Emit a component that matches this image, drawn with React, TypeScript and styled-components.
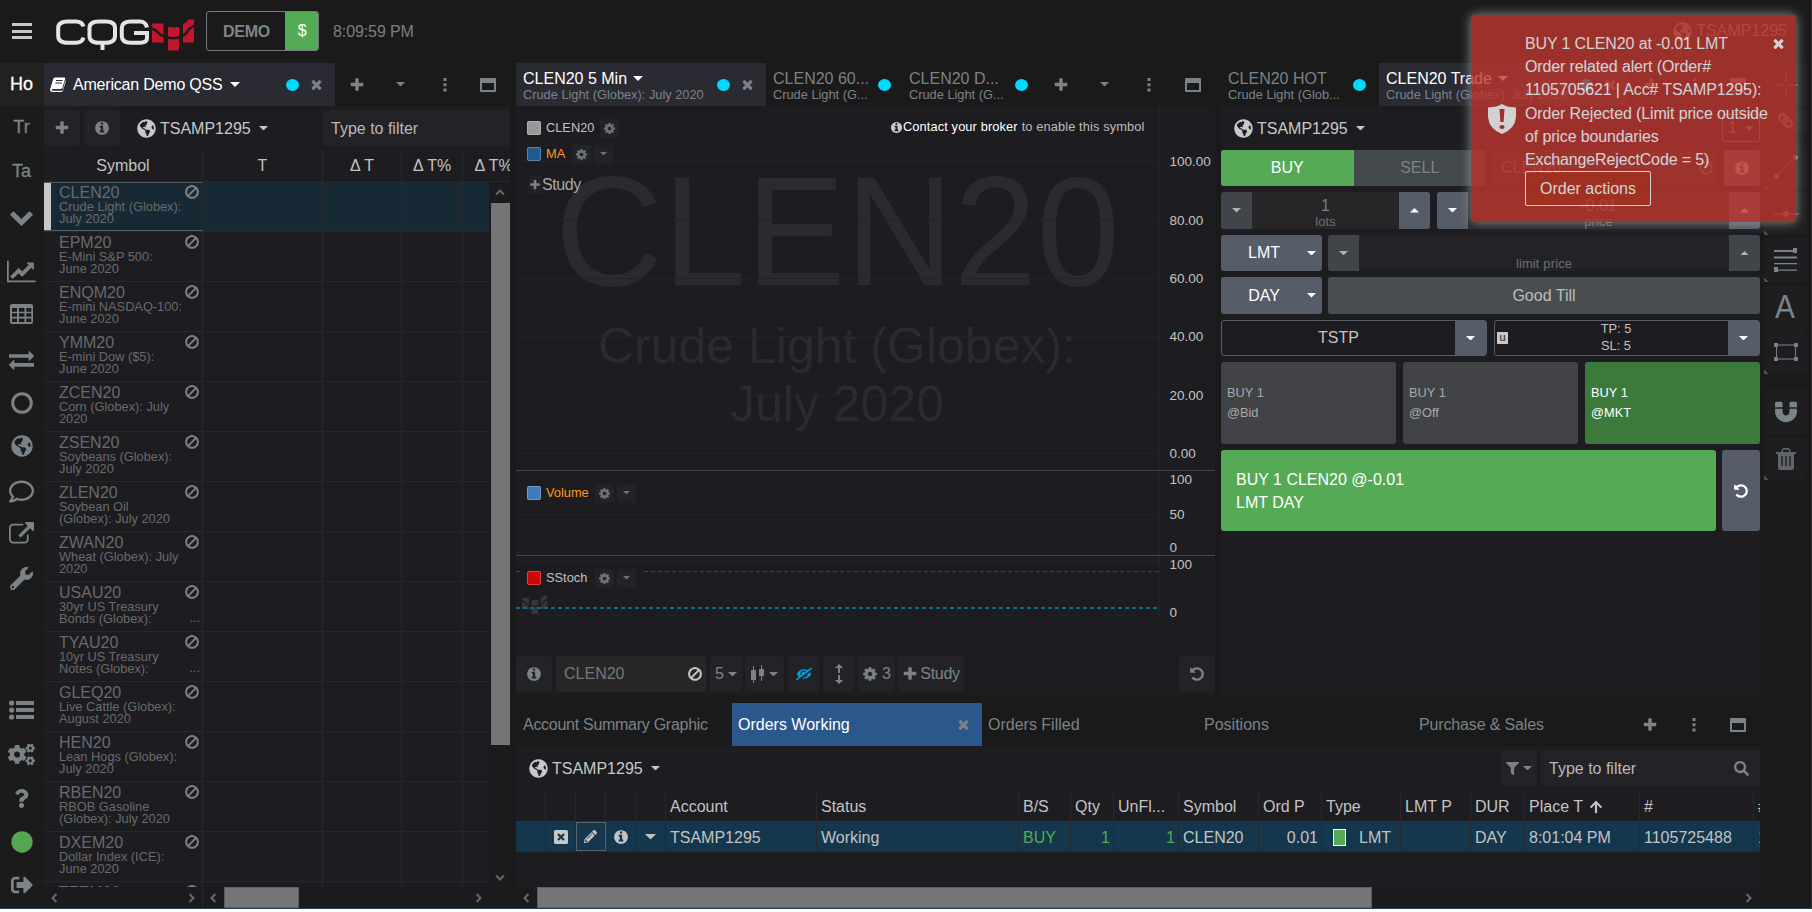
import React from "react";
import styled, { createGlobalStyle } from "styled-components";
import {
  FaGlobeAmericas, FaRegComment, FaWrench, FaCogs,
  FaQuestion, FaCircle, FaSignOutAlt, FaFilter, FaSearch, FaPencilAlt, FaArrowUp,
  FaMagnet, FaLink, FaEyeSlash,
} from "react-icons/fa";

const Global = createGlobalStyle`
  html, body { margin: 0; padding: 0; background: #fff; }
  * { box-sizing: border-box; }
  body { font-family: "Liberation Sans", Arial, sans-serif; font-size: 16px; color: #c3c3c3; overflow: hidden; }
  svg { display: block; flex: none; }
`;

/* ---------- icons ---------- */

const paths = {
  times: "M1490 1322q0 40-28 68l-136 136q-28 28-68 28t-68-28l-294-294-294 294q-28 28-68 28t-68-28l-136-136q-28-28-28-68t28-68l294-294-294-294q-28-28-28-68t28-68l136-136q28-28 68-28t68 28l294 294 294-294q28-28 68-28t68 28l136 136q28 28 28 68t-28 68l-294 294 294 294q28 28 28 68z",
  plus: "M1600 736v192q0 40-28 68t-68 28h-416v416q0 40-28 68t-68 28h-192q-40 0-68-28t-28-68v-416h-416q-40 0-68-28t-28-68v-192q0-40 28-68t68-28h416v-416q0-40 28-68t68-28h192q40 0 68 28t28 68v416h416q40 0 68 28t28 68z",
  chevron: "M1683 808l-742 741q-19 19-45 19t-45-19l-742-741q-19-19-19-45.500t19-45.500l166-165q19-19 45-19t45 19l531 531 531-531q19-19 45-19t45 19l166 165q19 19 19 45.500t-19 45.500z",
  info: "M1152 1376v-160q0-14-9-23t-23-9h-96v-512q0-14-9-23t-23-9h-320q-14 0-23 9t-9 23v160q0 14 9 23t23 9h96v320h-96q-14 0-23 9t-9 23v160q0 14 9 23t23 9h448q14 0 23-9t9-23zm-128-896v-160q0-14-9-23t-23-9h-192q-14 0-23 9t-9 23v160q0 14 9 23t23 9h192q14 0 23-9t9-23zm640 416q0 209-103 385.500t-279.500 279.500-385.500 103-385.500-103-279.500-279.500-103-385.500 103-385.500 279.500-279.500 385.500-103 385.500 103 279.500 279.500 103 385.500z",
  ban: "M1440 893q0-161-87-295l-754 753q137 89 297 89 111 0 211.500-43.500t173.500-116.500 116-174.500 43-212.500zm-999 299l755-754q-135-91-300-91-148 0-273 73t-198 199-73 274q0 162 89 299zm1223-299q0 157-61 300t-163.500 246-245 164-298.500 61-298.500-61-245-164-163.500-246-61-300 61-299.500 163.500-245.500 245-164 298.500-61 298.500 61 245 164 163.500 245.500 61 299.500z",
  cog: "M1152 896q0-106-75-181t-181-75-181 75-75 181 75 181 181 75 181-75 75-181zm512-109v222q0 12-8 23t-20 13l-185 28q-19 54-39 91 35 50 107 138 10 12 10 25t-9 23q-27 37-99 108t-94 71q-12 0-26-9l-138-108q-44 23-91 38-16 136-29 186-7 28-36 28h-222q-14 0-24.500-8.500t-11.500-21.500l-28-184q-49-16-90-37l-141 107q-10 9-25 9-14 0-25-11-126-114-165-168-7-10-7-23 0-12 8-23 15-21 51-66.500t54-70.500q-27-50-41-99l-183-27q-13-2-21-12.500t-8-23.500v-222q0-12 8-23t19-13l186-28q14-46 39-92-40-57-107-138-10-12-10-24 0-10 9-23 26-36 98.500-107.500t94.500-71.500q13 0 26 10l138 107q44-23 91-38 16-136 29-186 7-28 36-28h222q14 0 24.500 8.500t11.500 21.500l28 184q49 16 90 37l142-107q9-9 24-9 13 0 25 10 129 119 165 170 7 8 7 22 0 12-8 23-15 21-51 66.500t-54 70.500q26 50 41 98l183 28q13 2 21 12.500t8 23.500z",
  exchange: "M1792 1184v192q0 13-9.500 22.500t-22.500 9.500h-1376v192q0 13-9.500 22.500t-22.500 9.500q-12 0-24-10l-319-320q-9-9-9-22 0-14 9-23l320-320q9-9 23-9 13 0 22.500 9.500t9.500 22.500v192h1376q13 0 22.500 9.500t9.500 22.500zm0-544q0 14-9 23l-320 320q-9 9-23 9-13 0-22.500-9.500t-9.500-22.500v-192h-1376q-13 0-22.500-9.500t-9.500-22.500v-192q0-13 9.500-22.500t22.500-9.500h1376v-192q0-14 9-23t23-9q12 0 24 10l319 319q9 9 9 23z",
  undo: "M1664 896q0 156-61 298t-164 245-245 164-298 61q-172 0-327-72.500t-264-204.500q-7-10-6.500-22.500t8.500-20.500l137-138q10-9 25-9 16 2 23 12 73 95 179 147t225 52q104 0 198.500-40.500t163.500-109.500 109.500-163.500 40.500-198.500-40.500-198.500-109.500-163.500-163.500-109.500-198.500-40.500q-98 0-188 35.500t-160 101.500l137 138q31 30 14 69-17 40-59 40h-448q-26 0-45-19t-19-45v-448q0-42 40-59 39-17 69 14l130 129q107-101 244.500-156.500t284.500-55.500q156 0 298 61t245 164 164 245 61 298z",
  external: "M1408 928v320q0 119-84.500 203.500t-203.500 84.500h-832q-119 0-203.500-84.500t-84.500-203.500v-832q0-119 84.500-203.500t203.500-84.500h704q14 0 23 9t9 23v64q0 14-9 23t-23 9h-704q-66 0-113 47t-47 113v832q0 66 47 113t113 47h832q66 0 113-47t47-113v-320q0-14 9-23t23-9h64q14 0 23 9t9 23zm384-864v512q0 26-19 45t-45 19-45-19l-176-176-652 652q-10 10-23 10t-23-10l-114-114q-10-10-10-23t10-23l652-652-176-176q-19-19-19-45t19-45 45-19h512q26 0 45 19t19 45z",
  lineChart: "M2048 1536v128h-2048v-1536h128v1408h1920zm-128-1248v435q0 21-19.500 29.500t-35.500-7.500l-121-121-633 633q-10 10-23 10t-23-10l-233-233-416 416-192-192 585-585q10-10 23-10t23 10l233 233 464-464-121-121q-16-16-7.500-35.500t29.500-19.500h435q14 0 23 9t9 23z",
};

type IconName = keyof typeof paths;
const Icon = ({ name, size, color = "currentColor", turn }: { name: IconName; size: number; color?: string; turn?: number }) => {
  const w = name === "lineChart" ? 2048 : 1792;
  return (
    <svg width={(size * w) / 1792} height={size} viewBox={`0 0 ${w} 1792`} fill={color}>
      <path d={paths[name]} transform={turn ? `rotate(${turn} 896 896)` : undefined} />
    </svg>
  );
};

const Caret = ({ up, color = "currentColor", w = 10 }: { up?: boolean; color?: string; w?: number }) => (
  <svg width={w} height={w / 2} viewBox="0 0 10 5" fill={color}>
    <path d={up ? "M0 5L5 0L10 5Z" : "M0 0L5 5L10 0Z"} />
  </svg>
);
const Dots = () => (
  <svg width="4" height="14" viewBox="0 0 4 14" fill="currentColor">
    <path d="M.5 0h3v3h-3zM.5 5.300h3v3h-3zM.5 10.600h3v3h-3z" />
  </svg>
);
const WindowIcon = () => (
  <svg width="16" height="14" viewBox="0 0 16 14">
    <path fill="currentColor" fillRule="evenodd" d="M1 0h14a1 1 0 0 1 1 1v12a1 1 0 0 1-1 1H1a1 1 0 0 1-1-1V1a1 1 0 0 1 1-1zM2 5v7h12V5z" />
  </svg>
);
const BookIcon = () => (
  <svg width="16" height="15" viewBox="0 0 16 15">
    <path fill="#fff" d="M5 .5h9.200q1.300.2.900 1.500L12.300 11q-.4 1-1.500 1H2.600q-1 0-.7.900t1 .9h8.600q.9 0 1.200-.9L15.300 3.500q.7.500.4 1.300L13 13.600q-.5 1.400-1.800 1.400H2.500Q.5 15 .1 13.200q-.2-.9.200-1.700L3.200 2Q3.600.5 5 .5z" />
    <path d="M6 3.500h6.500M5.400 6h6.500" stroke="#2a2a33" strokeWidth="1" />
  </svg>
);
const TableIcon = () => (
  <svg width="23" height="20" viewBox="0 0 23 20">
    <path fill="currentColor" fillRule="evenodd" d="M2 0h19a2 2 0 0 1 2 2v16a2 2 0 0 1-2 2H2a2 2 0 0 1-2-2V2a2 2 0 0 1 2-2zM2 4v3.700h5V4zM9 4v3.700h5.500V4zM16.300 4v3.700h5V4zM2 9.300v3.400h5V9.300zM9 9.300v3.400h5.500V9.300zM16.300 9.300v3.400h5V9.300zM2 14.500v3.500h5v-3.500zM9 14.500v3.500h5.500v-3.500zM16.300 14.500v3.500h5v-3.500z" />
  </svg>
);
const ListIcon = () => (
  <svg width="25" height="20" viewBox="0 0 25 20" fill="currentColor">
    <path d="M7 1h18v4H7zM7 8h18v4H7zM7 15h18v4H7z" />
    <circle cx="2.600" cy="3" r="2.600" /><circle cx="2.600" cy="10" r="2.600" /><circle cx="2.600" cy="17" r="2.600" />
  </svg>
);
const TrashIcon = () => (
  <svg width="20" height="22" viewBox="0 0 20 22">
    <path fill="#606569" fillRule="evenodd" d="M0 4h5.500V2.500Q5.700.2 8 0h4q2.300.2 2.500 2.500V4H20v2H18v14q0 2-2 2H4q-2 0-2-2V6H0zM7 4h6V2.700Q13 1.700 12 1.700H8Q7 1.700 7 2.700zM5.300 8v10h1.400V8zM9.300 8v10h1.400V8zM13.300 8v10h1.400V8z" />
  </svg>
);
const MarkShapes = ({ fill, gap }: { fill: string; gap: string }) => (
  <g>
    <path fill={fill} d="M0 4.500H11.500V23.500H0ZM31 5.500L37 .5H42V23.500H31ZM16 8H27V31.500H16Z" />
    <path d="M-1 9.500L3.500 11Q10 19.300 21.500 19.300Q32.500 19.300 37 10L43 6" fill="none" stroke={gap} strokeWidth="2.400" />
    <path d="M17 6.500Q21.500 11 26 6.500" fill={gap} />
  </g>
);
const Logo = () => (
  <svg width="138" height="33" viewBox="0 0 138 33">
    <g fill="none" stroke="#e4e4e4" strokeWidth="4">
      <path d="M27.500 7.500Q26 2.500 20 2.500H12Q2.200 2.500 2.200 9V17Q2.200 23.800 12 23.800H20Q26 23.800 27.500 18.500" />
      <path d="M43 2.500H49.500Q59 2.500 59 9V17Q59 23.800 49.500 23.800H43Q33.500 23.800 33.500 17V9Q33.500 2.500 43 2.500ZM46.500 22V31" />
      <path d="M91 8.500Q89.500 2.500 84 2.500H75Q65.800 2.500 65.800 9V17Q65.800 23.800 75 23.800H84Q91 23.800 91 19V14H78" />
    </g>
    <g transform="translate(96 0)"><MarkShapes fill="#c4152f" gap="#1a1a1b" /></g>
  </svg>
);
const Candles = () => (
  <svg width="14" height="18" viewBox="0 0 14 18" fill="currentColor">
    <path d="M0 5h5v10H0zM2 1h1v17H2zM8 4h5v7H8zM10 0h1v16h-1z" />
  </svg>
);
const UpDown = () => (
  <svg width="8" height="20" viewBox="0 0 8 20" fill="currentColor">
    <path d="M4 0L8 4H5V9H3V4H0ZM4 20L8 16H5V11H3V16H0Z" />
  </svg>
);
const Shield = () => (
  <svg width="28" height="30" viewBox="0 0 28 30">
    <path fill="#fff" d="M14 0Q18 3 28 3.500V13Q27 25 14 30Q1 25 0 13V3.500Q10 3 14 0Z" />
    <path fill="#bd362f" d="M11.500 5h5l-.9 13h-3.200z" /><ellipse cx="14" cy="23" rx="2.600" ry="2.100" fill="#bd362f" />
  </svg>
);

/* ---------- shared parts ---------- */

const Screen = styled.div`
  width: 1812px; height: 909px; background: #1a1a1b; position: relative; overflow: hidden;
  display: flex; flex-direction: column; white-space: nowrap;
  border-bottom: 1px solid #1c454d; border-right: 1px solid #20383f;
`;
const TopBar = styled.header`
  height: 63px; flex: none; display: flex; align-items: center; padding: 0 24px 9px 12px;
`;
const Burger = styled.div`
  width: 20px; height: 16px; display: flex; flex-direction: column; justify-content: space-between;
  margin: 8px 24px 0 0; i { height: 3px; background: #c8c8c8; }
`;
const LogoWrap = styled.div`margin-top: 17px; height: 32px; margin-right: 12px; align-self: flex-start; padding-top: 2px;`;
const Mode = styled.div`
  width: 113px; height: 40px; display: flex; border: 1px solid #77787a; border-radius: 3px; overflow: hidden;
  margin: 8px 14px 0 0; line-height: 39px; text-align: center; color: #7e868b; font-weight: bold; letter-spacing: -.2px;
  span { flex: 1; } b { width: 34px; margin: -1px; line-height: 40px; background: #55ab55; color: #fff; font-weight: normal; }
`;
const Clock = styled.div`color: #7b7f82; padding-top: 9px; letter-spacing: -0.1px;`;
const User = styled.div`margin-left: auto; display: flex; align-items: center; gap: 4px; padding-top: 8px; color: #8a8a8c;`;
const Body = styled.div`flex: 1; min-height: 0; display: flex;`;
const Sidebar = styled.nav`
  width: 44px; flex: none; background: #1b1b1b; display: flex; flex-direction: column; color: #7b8388; padding-bottom: 2px;
`;
const SideItem = styled.div<{ $h: number; $on?: boolean; $lift?: number }>`
  height: ${(p) => p.$h}px; flex: none; display: flex; align-items: center; justify-content: center;
  font-size: 18px; -webkit-text-stroke: 0.3px; padding: 0 1px ${(p) => p.$lift ?? 0}px 0;
  ${(p) => p.$on && "background:#212120;color:#fff;"}
`;
const Spacer = styled.div`flex: 1;`;

const Panel = styled.section<{ $w?: number; $h?: number }>`
  ${(p) => (p.$w ? `width:${p.$w}px;` : "")} ${(p) => (p.$h ? `height:${p.$h}px;flex:none;` : "flex:1 1 auto;")}
  display: flex; flex-direction: column; background: #1d1c21; overflow: hidden;
`;
const SidePanel = styled(Panel)`flex: none;`;
const Tabs = styled.div`height: 43px; flex: none; display: flex; background: #1a1a1b; color: #7b8388;`;
const Tab = styled.div<{ $w: number; $on?: boolean; $blue?: boolean; $pad?: number; $left?: number; $track?: number }>`
  width: ${(p) => p.$w}px; flex: none; display: flex; align-items: center; padding: 0 ${(p) => p.$pad ?? 11}px 0 ${(p) => p.$left ?? 7}px;
  ${(p) => p.$on && "background:#2a2a33;"} ${(p) => p.$blue && "background:#2b588c;color:#fff;"}
  justify-content: space-between; letter-spacing: ${(p) => p.$track ?? 0}px;
`;
const TabText = styled.div`
  display: flex; flex-direction: column; padding-top: 2px; letter-spacing: 0;
  b, small { font-weight: normal; }
  b { line-height: 18px; height: 18px; display: block; }
  small { font-size: 12.8px; line-height: 14px; }
`;
const TabTitle = styled.span<{ $gap?: number }>`
  color: #fff; display: inline-flex; align-items: center; gap: ${(p) => p.$gap ?? 6}px;
`;
const Dot = styled.i`width: 13px; height: 12px; border-radius: 50%; background: #00d9ff; flex: none;`;
const TabEnd = styled.div`display: flex; align-items: center; gap: 10.5px; color: #7b8388;`;
const Tool = styled.div<{ $w?: number }>`width: ${(p) => p.$w ?? 44}px; flex: none; display: flex; align-items: center; justify-content: center; padding-right: 1px;`;

const Toolbar = styled.div`height: 44px; flex: none; display: flex; align-items: center;`;
const Btn = styled.div<{ $w: number; $gap?: number; $tight?: boolean }>`
  width: ${(p) => p.$w}px; height: 36px; flex: none; background: #232327; border-radius: 3px; margin-right: ${(p) => p.$gap ?? 4}px;
  display: flex; align-items: center; justify-content: center; gap: ${(p) => (p.$tight ? 2 : 4)}px; color: #7b8388;
  ${(p) => p.$tight && "letter-spacing:-.3px;"}
`;
const Account = styled.div`
  display: flex; align-items: center; gap: 4px; padding-left: 13px; color: #c8c8c8;
  span { padding-top: 1px; } svg:last-child { margin-left: 4px; }
`;
const Field = styled.div<{ $w: number }>`
  width: ${(p) => p.$w}px; height: 36px; background: #232327; border-radius: 3px; padding: 1px 11px 0 8px;
  display: flex; align-items: center; justify-content: space-between; color: #b9b9ba;
`;
const AccountPicker = () => (
  <Account><FaGlobeAmericas size={19} /><span>TSAMP1295</span><Caret color="#c8c8c8" w={9} /></Account>
);

/* ---------- quote board ---------- */

const HeadRow = styled.div`
  height: 32px; flex: none; display: flex; border-bottom: 1px solid #27262b; line-height: 31px; color: #c3c3c3;
`;
const Cell = styled.div<{ $w: number }>`
  width: ${(p) => p.$w}px; flex: none; border-right: 1px solid #28282c; text-align: center; overflow: hidden;
`;
const Grid = styled.div`flex: 1; min-height: 0; display: flex;`;
const Rows = styled.div`width: 445px; overflow: hidden; display: flex; flex-direction: column;`;
const Row = styled.div<{ $on?: boolean }>`
  height: 50px; flex: none; display: flex; border-bottom: 1px solid #27262b; ${(p) => p.$on && "background:#182936;"}
`;
const SymbolCell = styled(Cell)<{ $on?: boolean }>`
  text-align: left; padding: 2px 2px 0 15px; color: #686a6c; display: flex; justify-content: space-between;
  ${(p) => p.$on && "border-top:1px solid #505b63;border-bottom:1px solid #505b63;box-shadow:inset 7px 0 #c8c8c8;padding-top:1px;"}
`;
const Sym = styled.div`
  width: 124px; b { display: block; font-weight: normal; line-height: 18px; height: 17px; }
  p { margin: 0; font-size: 12.8px; line-height: 12px; height: 25px; white-space: pre; }
`;
const Flags = styled.div`display: flex; flex-direction: column; justify-content: space-between; align-items: flex-end; padding-bottom: 7px; font-size: 13px; line-height: 12px;`;
const VScroll = styled.div`
  width: 21px; display: flex; flex-direction: column; align-items: center; background: #1b1b1e; color: #66686c;
`;
const VThumb = styled.div`width: 19px; height: 542px; background: #757577; margin-left: 1px;`;
const ScrollCap = styled.div<{ $w?: number }>`
  width: ${(p) => p.$w ?? 21}px; height: 21px; flex: none; display: flex; align-items: center; justify-content: center; color: #66686c;
`;
const HScroll = styled.div`height: 21px; flex: none; display: flex; background: #1b1b1e;`;
const HPart = styled.div<{ $w: number; $line?: boolean }>`
  width: ${(p) => p.$w}px; display: flex; ${(p) => p.$line && "border-right:1px solid #28282c;"}
`;
const HThumb = styled.div<{ $w: number }>`width: ${(p) => p.$w}px; background: #757577; border: 1px solid #5e5e60;`;

const symbols: [string, string, boolean?][] = [
  ["CLEN20", "Crude Light (Globex):\nJuly 2020"],
  ["EPM20", "E-Mini S&P 500:\nJune 2020"],
  ["ENQM20", "E-mini NASDAQ-100:\nJune 2020"],
  ["YMM20", "E-mini Dow ($5):\nJune 2020"],
  ["ZCEN20", "Corn (Globex): July\n2020"],
  ["ZSEN20", "Soybeans (Globex):\nJuly 2020"],
  ["ZLEN20", "Soybean Oil\n(Globex): July 2020"],
  ["ZWAN20", "Wheat (Globex): July\n2020"],
  ["USAU20", "30yr US Treasury\nBonds (Globex):", true],
  ["TYAU20", "10yr US Treasury\nNotes (Globex):", true],
  ["GLEQ20", "Live Cattle (Globex):\nAugust 2020"],
  ["HEN20", "Lean Hogs (Globex):\nJuly 2020"],
  ["RBEN20", "RBOB Gasoline\n(Globex): July 2020"],
  ["DXEM20", "Dollar Index (ICE):\nJune 2020"],
  ["TFEM20", ""],
];

const QuoteBoard = () => (
  <SidePanel $w={466}>
    <Tabs>
      <Tab $w={291} $on $track={-0.2} $left={6}>
        <TabTitle $gap={7}><BookIcon />American Demo QSS<Caret /></TabTitle>
        <TabEnd><Dot /><Icon name="times" size={15} /></TabEnd>
      </Tab>
      <Tool><Icon name="plus" size={16} /></Tool><Tool><Caret w={9} /></Tool><Tool><Dots /></Tool><Tool $w={43}><WindowIcon /></Tool>
    </Tabs>
    <Toolbar>
      <Btn $w={36}><Icon name="plus" size={16} /></Btn>
      <Btn $w={36}><Icon name="info" size={16} /></Btn>
      <AccountPicker />
      <Spacer /><Field $w={187}>Type to filter</Field>
    </Toolbar>
    <HeadRow>
      <Cell $w={159}>Symbol</Cell><Cell $w={120}>T</Cell><Cell $w={79}>Δ T</Cell><Cell $w={61}>Δ T%</Cell>
      <Cell $w={62}>Δ T%</Cell>
    </HeadRow>
    <Grid>
      <Rows>
        {symbols.map(([s, d, more], i) => (
          <Row key={s} $on={i === 0}>
            <SymbolCell $w={159} $on={i === 0}>
              <Sym><b>{s}</b><p>{d}</p></Sym>
              <Flags><Icon name="ban" size={16} color="#808080" />{more ? "..." : ""}</Flags>
            </SymbolCell>
            <Cell $w={120} /><Cell $w={79} /><Cell $w={61} />
          </Row>
        ))}
      </Rows>
      <VScroll>
        <ScrollCap><Icon name="chevron" size={10} turn={180} /></ScrollCap>
        <VThumb />
        <Spacer />
        <ScrollCap><Icon name="chevron" size={10} /></ScrollCap>
      </VScroll>
    </Grid>
    <HScroll>
      <HPart $w={159} $line><ScrollCap><Icon name="chevron" size={10} turn={90} /></ScrollCap><Spacer /><ScrollCap $w={23}><Icon name="chevron" size={10} turn={-90} /></ScrollCap></HPart>
      <HPart $w={286}><ScrollCap><Icon name="chevron" size={10} turn={90} /></ScrollCap><HThumb $w={75} /><Spacer /><ScrollCap $w={23}><Icon name="chevron" size={10} turn={-90} /></ScrollCap></HPart>
    </HScroll>
  </SidePanel>
);

/* ---------- chart ---------- */

const ChartArea = styled.div`height: 546px; flex: none; position: relative; font-size: 12.8px;`;
const Legend = styled.div<{ $top: number; $color?: string }>`
  position: absolute; left: 11px; top: ${(p) => p.$top}px; height: 20px; display: flex; align-items: center;
  color: ${(p) => p.$color ?? "#c3c3c3"};
`;
const Swatch = styled.i<{ $c: string }>`
  width: 14px; height: 14px; border-radius: 2px; background: ${(p) => p.$c}; border: 1px solid rgba(255,255,255,.25); margin-right: 5px;
`;
const LegendText = styled.span<{ $w: number }>`width: ${(p) => p.$w}px; padding-bottom: 2px;`;
const MiniBtn = styled.span`
  width: 19px; height: 19px; border-radius: 2px; background: #232327; color: #6b7379; margin-right: 2.5px;
  display: flex; align-items: center; justify-content: center;
`;
const AddStudy = styled.div`
  position: absolute; left: 13px; top: 69px; height: 20px; display: flex; align-items: center; font-size: 16px; color: #a9a9aa; letter-spacing: -0.4px;
  span { width: 13px; height: 18px; background: #232327; display: flex; align-items: center; color: #7b8388; }
`;
const Notice = styled.div`
  position: absolute; left: 374px; top: 13px; display: flex; align-items: center; line-height: 16px; color: #bdbdbd; letter-spacing: .12px;
  b { color: #fff; font-weight: normal; margin: 0 4px 0 0; }
`;
const BottomTools = styled.div`height: 44px; display: flex; padding-top: 4px;`;
const SymbolInput = styled.div`
  width: 150px; height: 36px; background: #272728; border-radius: 3px; margin-right: 4px; padding: 0 3px 0 8px;
  display: flex; align-items: center; justify-content: space-between; color: #757779;
`;

const priceLines: [number, string][] = [[55.5, "100.00"], [114.5, "80.00"], [172.5, "60.00"], [230.5, "40.00"], [289.5, "20.00"], [347.5, "0.00"]];

const ChartDrawing = () => (
  <svg width="699" height="546" viewBox="0 0 699 546" fontFamily="Liberation Sans, Arial, sans-serif">
    <g fill="#2b2a2f" textAnchor="middle">
      <text x="321.500" y="179" fontSize="156" textLength="565" lengthAdjust="spacingAndGlyphs">CLEN20</text>
      <text x="321" y="257" fontSize="50">Crude Light (Globex):</text>
      <text x="321" y="315" fontSize="50">July 2020</text>
    </g>
    <g stroke="#232326">
      {priceLines.map(([y]) => <path key={y} d={`M0 ${y}H649`} />)}
      <path d="M0 370.500H649M0 408.500H649M0 446.500H649M0 454.500H649M0 513.500H649M643.500 0V515" />
    </g>
    <path d="M0 364.500H699M0 449.500H699" stroke="#44454a" />
    <path d="M0 465.500H4M128 465.500H643" stroke="#c40d10" strokeDasharray="4 3" />
    <g transform="translate(6 489) scale(.6)"><MarkShapes fill="#36363a" gap="#1d1c21" /></g>
    <path d="M0 502H643" stroke="#126a8a" strokeWidth="2" strokeDasharray="4 3" />
    <g fill="#c3c3c3" fontSize="13.500">
      {priceLines.map(([y, t]) => <text key={t} x="653.500" y={y + 4.5}>{t}</text>)}
      <text x="653.500" y="378">100</text><text x="653.500" y="413">50</text><text x="653.500" y="446">0</text>
      <text x="653.500" y="463">100</text><text x="653.500" y="511">0</text>
    </g>
  </svg>
);

const Chart = () => (
  <Panel $w={699} $h={633}>
    <Tabs>
      <Tab $w={250} $on>
        <TabText><b><TabTitle>CLEN20 5 Min<Caret /></TabTitle></b><small>Crude Light (Globex): July 2020</small></TabText>
        <TabEnd><Dot /><Icon name="times" size={15} /></TabEnd>
      </Tab>
      <Tab $w={136}><TabText><b>CLEN20 60...</b><small>Crude Light (G...</small></TabText><Dot /></Tab>
      <Tab $w={137}><TabText><b>CLEN20 D...</b><small>Crude Light (G...</small></TabText><Dot /></Tab>
      <Tool><Icon name="plus" size={16} /></Tool><Tool><Caret w={9} /></Tool><Tool><Dots /></Tool><Tool><WindowIcon /></Tool>
    </Tabs>
    <ChartArea>
      <ChartDrawing />
      <Legend $top={12}><Swatch $c="#989898" /><LegendText $w={54}>CLEN20</LegendText><MiniBtn><Icon name="cog" size={13} /></MiniBtn></Legend>
      <Legend $top={38} $color="#ff9a1a"><Swatch $c="#1f5a90" /><LegendText $w={26}>MA</LegendText><MiniBtn><Icon name="cog" size={13} /></MiniBtn><MiniBtn><Caret w={7} /></MiniBtn></Legend>
      <AddStudy><span><Icon name="plus" size={12} /></span>Study</AddStudy>
      <Notice><Icon name="info" size={13} color="#c8c8c8" /><b>Contact your broker</b>to enable this symbol</Notice>
      <Legend $top={377} $color="#ff9a1a"><Swatch $c="#3f7cb8" /><LegendText $w={49}>Volume</LegendText><MiniBtn><Icon name="cog" size={13} /></MiniBtn><MiniBtn><Caret w={7} /></MiniBtn></Legend>
      <Legend $top={462}><Swatch $c="#cc0606" /><LegendText $w={49}>SStoch</LegendText><MiniBtn><Icon name="cog" size={13} /></MiniBtn><MiniBtn><Caret w={7} /></MiniBtn></Legend>
    </ChartArea>
    <BottomTools>
      <Btn $w={36}><Icon name="info" size={16} /></Btn>
      <SymbolInput>CLEN20<Icon name="ban" size={16} color="#c8c8c8" /></SymbolInput>
      <Btn $w={32} $gap={3}>5<Caret w={9} /></Btn>
      <Btn $w={39}><Candles /><Caret w={9} /></Btn>
      <Btn $w={31}><FaEyeSlash size={16} color="#00a0dc" transform="scale(-1 1)" /></Btn>
      <Btn $w={31}><UpDown /></Btn>
      <Btn $w={37} $gap={3}><Icon name="cog" size={16} />3</Btn>
      <Btn $w={66} $tight><Icon name="plus" size={16} />Study</Btn>
      <Spacer />
      <Btn $w={36} $gap={0}><Icon name="undo" size={16} /></Btn>
    </BottomTools>
  </Panel>
);

/* ---------- trade ticket ---------- */

const Ticket = styled.div`flex: 1; display: flex; flex-direction: column; gap: 6px;`;
const Line = styled.div<{ $h?: number; $gap?: number }>`height: ${(p) => p.$h ?? 36}px; flex: none; display: flex; gap: ${(p) => p.$gap ?? 6}px;`;
const Block = styled.div<{ $w?: number; $bg: string; $fg?: string }>`
  ${(p) => (p.$w ? `width:${p.$w}px;flex:none;` : "flex:1;")} background: ${(p) => p.$bg}; color: ${(p) => p.$fg ?? "#fff"};
  border-radius: 3px; display: flex; align-items: center; justify-content: center; overflow: hidden;
`;
const SymbolBlock = styled(Block)`justify-content: space-between; padding: 0 3px 0 8px;`;
const Side = styled.div<{ $on?: boolean }>`
  flex: 1; height: 100%; display: flex; align-items: center; justify-content: center;
  background: ${(p) => (p.$on ? "#55ab55" : "#43484b")}; color: ${(p) => (p.$on ? "#fff" : "#7d8386")};
`;
const Step = styled.div<{ $off?: boolean }>`
  width: 31px; height: 100%; flex: none; display: flex; align-items: center; justify-content: center;
  background: ${(p) => (p.$off ? "#414448" : "#565d69")}; color: ${(p) => (p.$off ? "#b0b0b0" : "#fff")};
`;
const Value = styled.div`
  flex: 1; height: 100%; display: flex; flex-direction: column; align-items: center; justify-content: flex-end; color: #7d8083; line-height: 19px;
  small { font-size: 12.8px; line-height: 14px; color: #6d7073; letter-spacing: .2px; }
`;
const Select = styled.div`
  width: 101px; flex: none; background: #565d69; border-radius: 3px; color: #fff; display: flex; align-items: center;
  span { flex: 1; text-align: center; } svg { margin-right: 6px; }
`;
const Outline = styled.div`
  flex: 1; border: 1px solid #565d69; border-radius: 3px; display: flex; align-items: center; overflow: hidden; color: #c3c3c3;
  > span { flex: 1; text-align: center; } > p { flex: 1; margin: 0; text-align: center; font-size: 12.8px; line-height: 17px; padding: 0 0 2px 9px; }
`;
const Badge = styled.i`
  width: 11px; height: 12px; margin-left: 2px; background: #c8c8c8; color: #1d1c21; font: 11px/11px "Liberation Sans", sans-serif; text-align: center; margin-right: -13px;
`;
const Quick = styled.div<{ $on?: boolean }>`
  flex: 1; border-radius: 3px; padding: 21px 0 0 6px; font-size: 12.8px; line-height: 19.5px;
  background: ${(p) => (p.$on ? "#3c7a3c" : "#414347")}; color: ${(p) => (p.$on ? "#fff" : "#a8a9aa")};
`;
const Submit = styled.div`flex: 1; background: #55ab55; border-radius: 3px; color: #fff; padding: 18px 0 0 15px; line-height: 23px;`;
const MultiBox = styled.div`
  width: 38px; height: 28px; border: 1px solid #77797c; border-radius: 2px; display: flex; align-items: center; justify-content: center; gap: 8px; color: #8a8d90;
`;

const Trade = () => (
  <Panel $w={539} $h={633}>
    <Tabs>
      <Tab $w={158} $pad={13}><TabText><b>CLEN20 HOT</b><small>Crude Light (Glob...</small></TabText><Dot /></Tab>
      <Tab $w={250} $on>
        <TabText><b><TabTitle>CLEN20 Trade<Caret /></TabTitle></b><small>Crude Light (Globex): July 2020</small></TabText>
        <TabEnd><Dot /><Icon name="times" size={15} /></TabEnd>
      </Tab>
      <Tool><Icon name="plus" size={16} /></Tool><Tool><Dots /></Tool><Tool $w={43}><WindowIcon /></Tool>
    </Tabs>
    <Toolbar><AccountPicker /><Spacer /><MultiBox>1<Caret w={9} /></MultiBox></Toolbar>
    <Ticket>
      <Line $gap={7}>
        <Block $w={265} $bg="#43484b"><Side $on>BUY</Side><Side>SELL</Side></Block>
        <SymbolBlock $bg="#232327" $fg="#757779">CLEN20<Icon name="ban" size={16} /></SymbolBlock>
        <Block $w={36} $bg="#565d69" $fg="#c8c8c8"><Icon name="info" size={16} /></Block>
      </Line>
      <Line $h={37} $gap={7}>
        <Block $w={209} $bg="#262628"><Step $off><Caret w={9} /></Step><Value>1<small>lots</small></Value><Step><Caret up w={9} /></Step></Block>
        <Block $bg="#262628"><Step><Caret w={9} /></Step><Value>-0.01<small>price</small></Value><Step><Caret up w={9} /></Step></Block>
      </Line>
      <Line>
        <Select><span>LMT</span><Caret w={9} /></Select>
        <Block $bg="#232327"><Step $off><Caret w={9} /></Step><Value><small>limit price</small></Value><Step $off><Caret up w={9} /></Step></Block>
      </Line>
      <Line $h={37}>
        <Select><span>DAY</span><Caret w={9} /></Select>
        <Block $bg="#4a4d50" $fg="#bcbdbe">Good Till</Block>
      </Line>
      <Line $gap={7}>
        <Outline><span>TSTP</span><Step><Caret w={9} /></Step></Outline>
        <Outline><Badge>u</Badge><p>TP: 5<br />SL: 5</p><Step><Caret w={9} /></Step></Outline>
      </Line>
      <Line $h={82} $gap={7}>
        <Quick>BUY 1<br />@Bid</Quick><Quick>BUY 1<br />@Off</Quick><Quick $on>BUY 1<br />@MKT</Quick>
      </Line>
      <Line $h={81}>
        <Submit>BUY 1 CLEN20 @-0.01<br />LMT DAY</Submit>
        <Block $w={38} $bg="#565d69"><Icon name="undo" size={16} /></Block>
      </Line>
    </Ticket>
  </Panel>
);

/* ---------- orders ---------- */

const OHead = styled.div`height: 32px; flex: none; display: flex; line-height: 32px; border-bottom: 1px solid #27343c; overflow: hidden;`;
const ORow = styled(OHead)`height: 30px; line-height: 30px; background: #14374d; border-bottom: 1px solid #262b30;`;
const OCell = styled.div<{ $w: number; $right?: boolean; $green?: boolean; $box?: boolean }>`
  width: ${(p) => p.$w}px; flex: none; border-right: 1px solid #27282c; padding: 2px ${(p) => (p.$right ? 3 : 2)}px 0 4px; overflow: hidden;
  display: flex; align-items: center; justify-content: ${(p) => (p.$right ? "flex-end" : "flex-start")};
  ${(p) => p.$green && "color:#55ab55;"} ${(p) => p.$box && "outline:1px solid #56636e;outline-offset:-1px;"}
`;
const IconCell = styled(OCell)`justify-content: center; padding: 0;`;
const SortIcon = styled(FaArrowUp)`margin-left: 6px;`;
const BuyMark = styled.i`width: 13px; height: 17px; background: #55ab55; border: 1px solid #fff; margin: 0 13px 1px 7px;`;
const cols: [number, string, string][] = [
  [151, "Account", "TSAMP1295"], [202, "Status", "Working"], [52, "B/S", "BUY"], [43, "Qty", "1"], [65, "UnFl...", "1"],
  [80, "Symbol", "CLEN20"], [63, "Ord P", "0.01"], [79, "Type", "LMT"], [70, "LMT P", ""], [54, "DUR", "DAY"],
  [115, "Place T", "8:01:04 PM"], [114, "#", "1105725488"], [40, "#", "1"],
];
const CancelIcon = () => (
  <svg width="14" height="14" viewBox="0 0 14 14">
    <rect width="14" height="14" rx="1.500" fill="#c8c8c8" />
    <path d="M4 4L10 10M10 4L4 10" stroke="#14374d" strokeWidth="2.200" />
  </svg>
);

const Orders = () => (
  <Panel $w={1244}>
    <Tabs>
      <Tab $w={216} $track={-0.28}>Account Summary Graphic</Tab>
      <Tab $w={250} $blue $left={6}>Orders Working<TabEnd><Icon name="times" size={15} /></TabEnd></Tab>
      <Tab $w={216} $left={6}>Orders Filled</Tab>
      <Tab $w={215} $left={6}>Positions</Tab>
      <Tab $w={215} $left={6} $track={-0.15}>Purchase &amp; Sales</Tab>
      <Tool><Icon name="plus" size={16} /></Tool><Tool><Dots /></Tool><Tool><WindowIcon /></Tool>
    </Tabs>
    <Toolbar>
      <AccountPicker /><Spacer />
      <Btn $w={36}><FaFilter size={13} /><Caret w={9} /></Btn>
      <Field $w={219}>Type to filter<FaSearch size={15} color="#7b8388" /></Field>
    </Toolbar>
    <OHead>
      <OCell $w={30} /><OCell $w={30} /><OCell $w={30} /><OCell $w={30} /><OCell $w={30} />
      {cols.map(([w, h], i) => <OCell key={i} $w={w}>{h}{h === "Place T" && <SortIcon size={14} />}</OCell>)}
    </OHead>
    <ORow>
      <OCell $w={30} /><IconCell $w={30}><CancelIcon /></IconCell><IconCell $w={30} $box><FaPencilAlt size={13} /></IconCell>
      <IconCell $w={30}><Icon name="info" size={16} /></IconCell><IconCell $w={30}><Caret w={11} /></IconCell>
      {cols.map(([w, h, v], i) => (
        <OCell key={i} $w={w} $right={[3, 4, 6].includes(i)} $green={[2, 3, 4].includes(i)}>{h === "Type" && <BuyMark />}{v}</OCell>
      ))}
    </ORow>
    <Spacer />
    <HScroll>
      <ScrollCap><Icon name="chevron" size={10} turn={90} /></ScrollCap><HThumb $w={835} /><Spacer /><ScrollCap $w={24}><Icon name="chevron" size={10} turn={-90} /></ScrollCap>
    </HScroll>
  </Panel>
);

/* ---------- drawing tools ---------- */

const DrawBar = styled.aside`width: 43px; flex: none; margin-left: 4px; display: flex; flex-direction: column; color: #7b8388;`;
const DrawCell = styled.div<{ $h?: number; $mb?: number; $corner?: boolean }>`
  height: ${(p) => p.$h ?? 44}px; flex: none; margin-bottom: ${(p) => p.$mb ?? 3}px; border-radius: 2px; display: flex; align-items: center; justify-content: center;
  background: ${(p) => (p.$corner ? "linear-gradient(45deg,#55585b 3px,#1e1e20 3.5px)" : "#1e1e20")};
`;
const LinesIcon = () => (
  <svg width="24" height="24" viewBox="0 0 24 24" fill="currentColor">
    <path d="M0 2h20v2H0zM19 0h4v5h-4zM0 8.500h23v2H0zM0 15h23v1.200H0zM0 19h4v5H0zM4 21.500h19v1.200H4z" />
  </svg>
);
const LetterA = styled.span`font-size: 33px; line-height: 40px; color: #7b8388; transform: scaleX(.9);`;
const ShapeIcon = () => (
  <svg width="24" height="18" viewBox="0 0 24 18" fill="none" stroke="currentColor">
    <path d="M2 2H22M2 16H22M2.500 2V16M21.500 2V16" />
    <path fill="currentColor" d="M.5.500h3v3h-3zM20.500.500h3v3h-3zM.5 14.500h3v3h-3zM20.500 14.500h3v3h-3z" />
  </svg>
);

const DrawTools = () => (
  <DrawBar>
    <DrawCell $h={43}><svg width="24" height="24" viewBox="0 0 24 24" stroke="currentColor"><path d="M12 0V9M12 15V24M0 12H9M15 12H24" /></svg></DrawCell>
    <DrawCell $h={23} $mb={13}><FaLink size={15} transform="scale(-1 1)" /></DrawCell>
    <DrawCell $corner><svg width="24" height="24" viewBox="0 0 24 24" stroke="currentColor" fill="currentColor"><path d="M2 22L22 2" /><circle cx="2.500" cy="21.500" r="2" /><circle cx="21.500" cy="2.500" r="2" /></svg></DrawCell>
    <DrawCell $corner $h={43}><svg width="26" height="8" viewBox="0 0 26 8" stroke="currentColor" fill="currentColor"><path d="M0 4H26" /><circle cx="13" cy="4" r="2.500" /></svg></DrawCell>
    <DrawCell $corner><LinesIcon /></DrawCell>
    <DrawCell $mb={1}><LetterA>A</LetterA></DrawCell>
    <DrawCell $corner $mb={16}><ShapeIcon /></DrawCell>
    <DrawCell><FaMagnet size={22} /></DrawCell>
    <DrawCell $corner $h={43}><TrashIcon /></DrawCell>
  </DrawBar>
);

/* ---------- alert ---------- */

const Toast = styled.div`
  position: absolute; left: 1471px; top: 15px; width: 325px; height: 207px; border-radius: 3px; background: #bd362f;
  opacity: .8; box-shadow: 0 0 12px #aaa; color: #fff; display: flex; padding: 17px 11px 0 17px; line-height: 23.2px;
`;
const ToastIcon = styled.div`padding-top: 72px;`;
const ToastText = styled.div`flex: 1; margin-left: 9px; letter-spacing: -.13px;`;
const ToastBtn = styled.div`
  width: 126px; height: 35px; border: 1px solid #fff; border-radius: 2px; line-height: 34px; text-align: center; background: #c03420; letter-spacing: 0;
`;
const CloseWrap = styled.div`width: 14px; padding-top: 4px; margin-left: -14px;`;

const Center = styled.div`display: flex; flex-direction: column; margin-left: 6px;`;
const TopRow = styled.div`display: flex; gap: 6px; margin-bottom: 7px; flex: none;`;

export default function App() {
  return (
    <>
      <Global />
      <Screen>
        <TopBar>
          <Burger><i /><i /><i /></Burger>
          <LogoWrap><Logo /></LogoWrap>
          <Mode><span>DEMO</span><b>$</b></Mode>
          <Clock>8:09:59 PM</Clock>
          <User><FaGlobeAmericas size={19} />TSAMP1295</User>
        </TopBar>
        <Body>
          <Sidebar>
            <SideItem $h={43} $on>Ho</SideItem>
            <SideItem $h={43}>Tr</SideItem>
            <SideItem $h={44}>Ta</SideItem>
            <SideItem $h={47}><Icon name="chevron" size={25} /></SideItem>
            <SideItem $h={62}><Icon name="lineChart" size={25} /></SideItem>
            <SideItem $h={24}><TableIcon /></SideItem>
            <SideItem $h={70} $lift={4}><Icon name="exchange" size={25} /></SideItem>
            <SideItem $h={16} $lift={2}>
              <svg width="22" height="22" viewBox="0 0 22 22"><circle cx="11" cy="11" r="9.300" fill="none" stroke="currentColor" strokeWidth="3" /></svg>
            </SideItem>
            <SideItem $h={70} $lift={2}><FaGlobeAmericas size={22} /></SideItem>
            <SideItem $h={20} $lift={1}><FaRegComment size={25} /></SideItem>
            <SideItem $h={64}><Icon name="external" size={25} /></SideItem>
            <SideItem $h={26} $lift={1}><FaWrench size={23} /></SideItem>
            <Spacer />
            <SideItem $h={44}><ListIcon /></SideItem>
            <SideItem $h={44}><FaCogs size={27} /></SideItem>
            <SideItem $h={44}><FaQuestion size={19} /></SideItem>
            <SideItem $h={43}><FaCircle size={22} color="#55a555" /></SideItem>
            <SideItem $h={43}><FaSignOutAlt size={22} /></SideItem>
          </Sidebar>
          <QuoteBoard />
          <Center>
            <TopRow><Chart /><Trade /></TopRow>
            <Orders />
          </Center>
          <DrawTools />
        </Body>
        <Toast>
          <ToastIcon><Shield /></ToastIcon>
          <ToastText>
            BUY 1 CLEN20 at -0.01 LMT<br />Order related alert (Order#<br />1105705621 | Acc# TSAMP1295):<br />
            Order Rejected (Limit price outside<br />of price boundaries<br />ExchangeRejectCode = 5)
            <ToastBtn>Order actions</ToastBtn>
          </ToastText>
          <CloseWrap><Icon name="times" size={15} /></CloseWrap>
        </Toast>
      </Screen>
    </>
  );
}
